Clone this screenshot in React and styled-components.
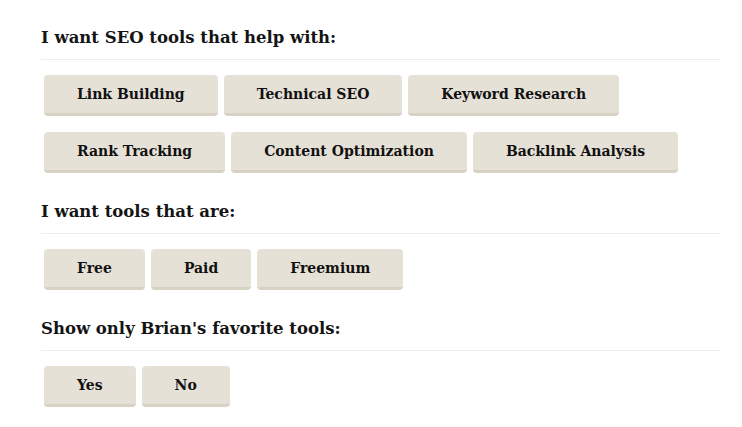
import React from "react";
import styled, { createGlobalStyle } from "styled-components";

const GlobalStyle = createGlobalStyle`
  body {
    margin: 0;
    background: #ffffff;
    font-family: "DejaVu Serif", Georgia, serif;
  }
`;

const Page = styled.div`
  box-sizing: border-box;
  width: 742px;
  padding: 26px 22px 0 41px;
`;

const Section = styled.section`
  margin-bottom: 27.5px;
`;

const Heading = styled.h3`
  margin: 0;
  padding-bottom: 9px;
  border-bottom: 1px solid #ececec;

  font-size: 16.5px;
  line-height: 24px;
  font-weight: bold;
  color: #141414;
`;

const Options = styled.div`
  display: flex;
  flex-wrap: wrap;
  column-gap: 6px;
  row-gap: 16px;
  padding: 14.5px 0 0 3px;
`;

const Option = styled.button`
  box-sizing: border-box;
  height: 41px;
  padding: 1px 33px 0;
  border: none;
  border-bottom: 3px solid #d8d2c5;
  border-radius: 4px;
  background: #e6e1d7;

  font-family: "DejaVu Serif", Georgia, serif;
  font-size: 14px;
  font-weight: bold;
  color: #111111;
  cursor: pointer;
`;

const groups = [
  {
    title: "I want SEO tools that help with:",
    options: [
      "Link Building",
      "Technical SEO",
      "Keyword Research",
      "Rank Tracking",
      "Content Optimization",
      "Backlink Analysis",
    ],
  },
  { title: "I want tools that are:", options: ["Free", "Paid", "Freemium"] },
  { title: "Show only Brian's favorite tools:", options: ["Yes", "No"] },
];

const App = () => {
  return (
    <Page>
      <GlobalStyle />
      {groups.map((group) => (
        <Section key={group.title}>
          <Heading>{group.title}</Heading>
          <Options>
            {group.options.map((option) => (
              <Option key={option}>{option}</Option>
            ))}
          </Options>
        </Section>
      ))}
    </Page>
  );
};

export default App;
